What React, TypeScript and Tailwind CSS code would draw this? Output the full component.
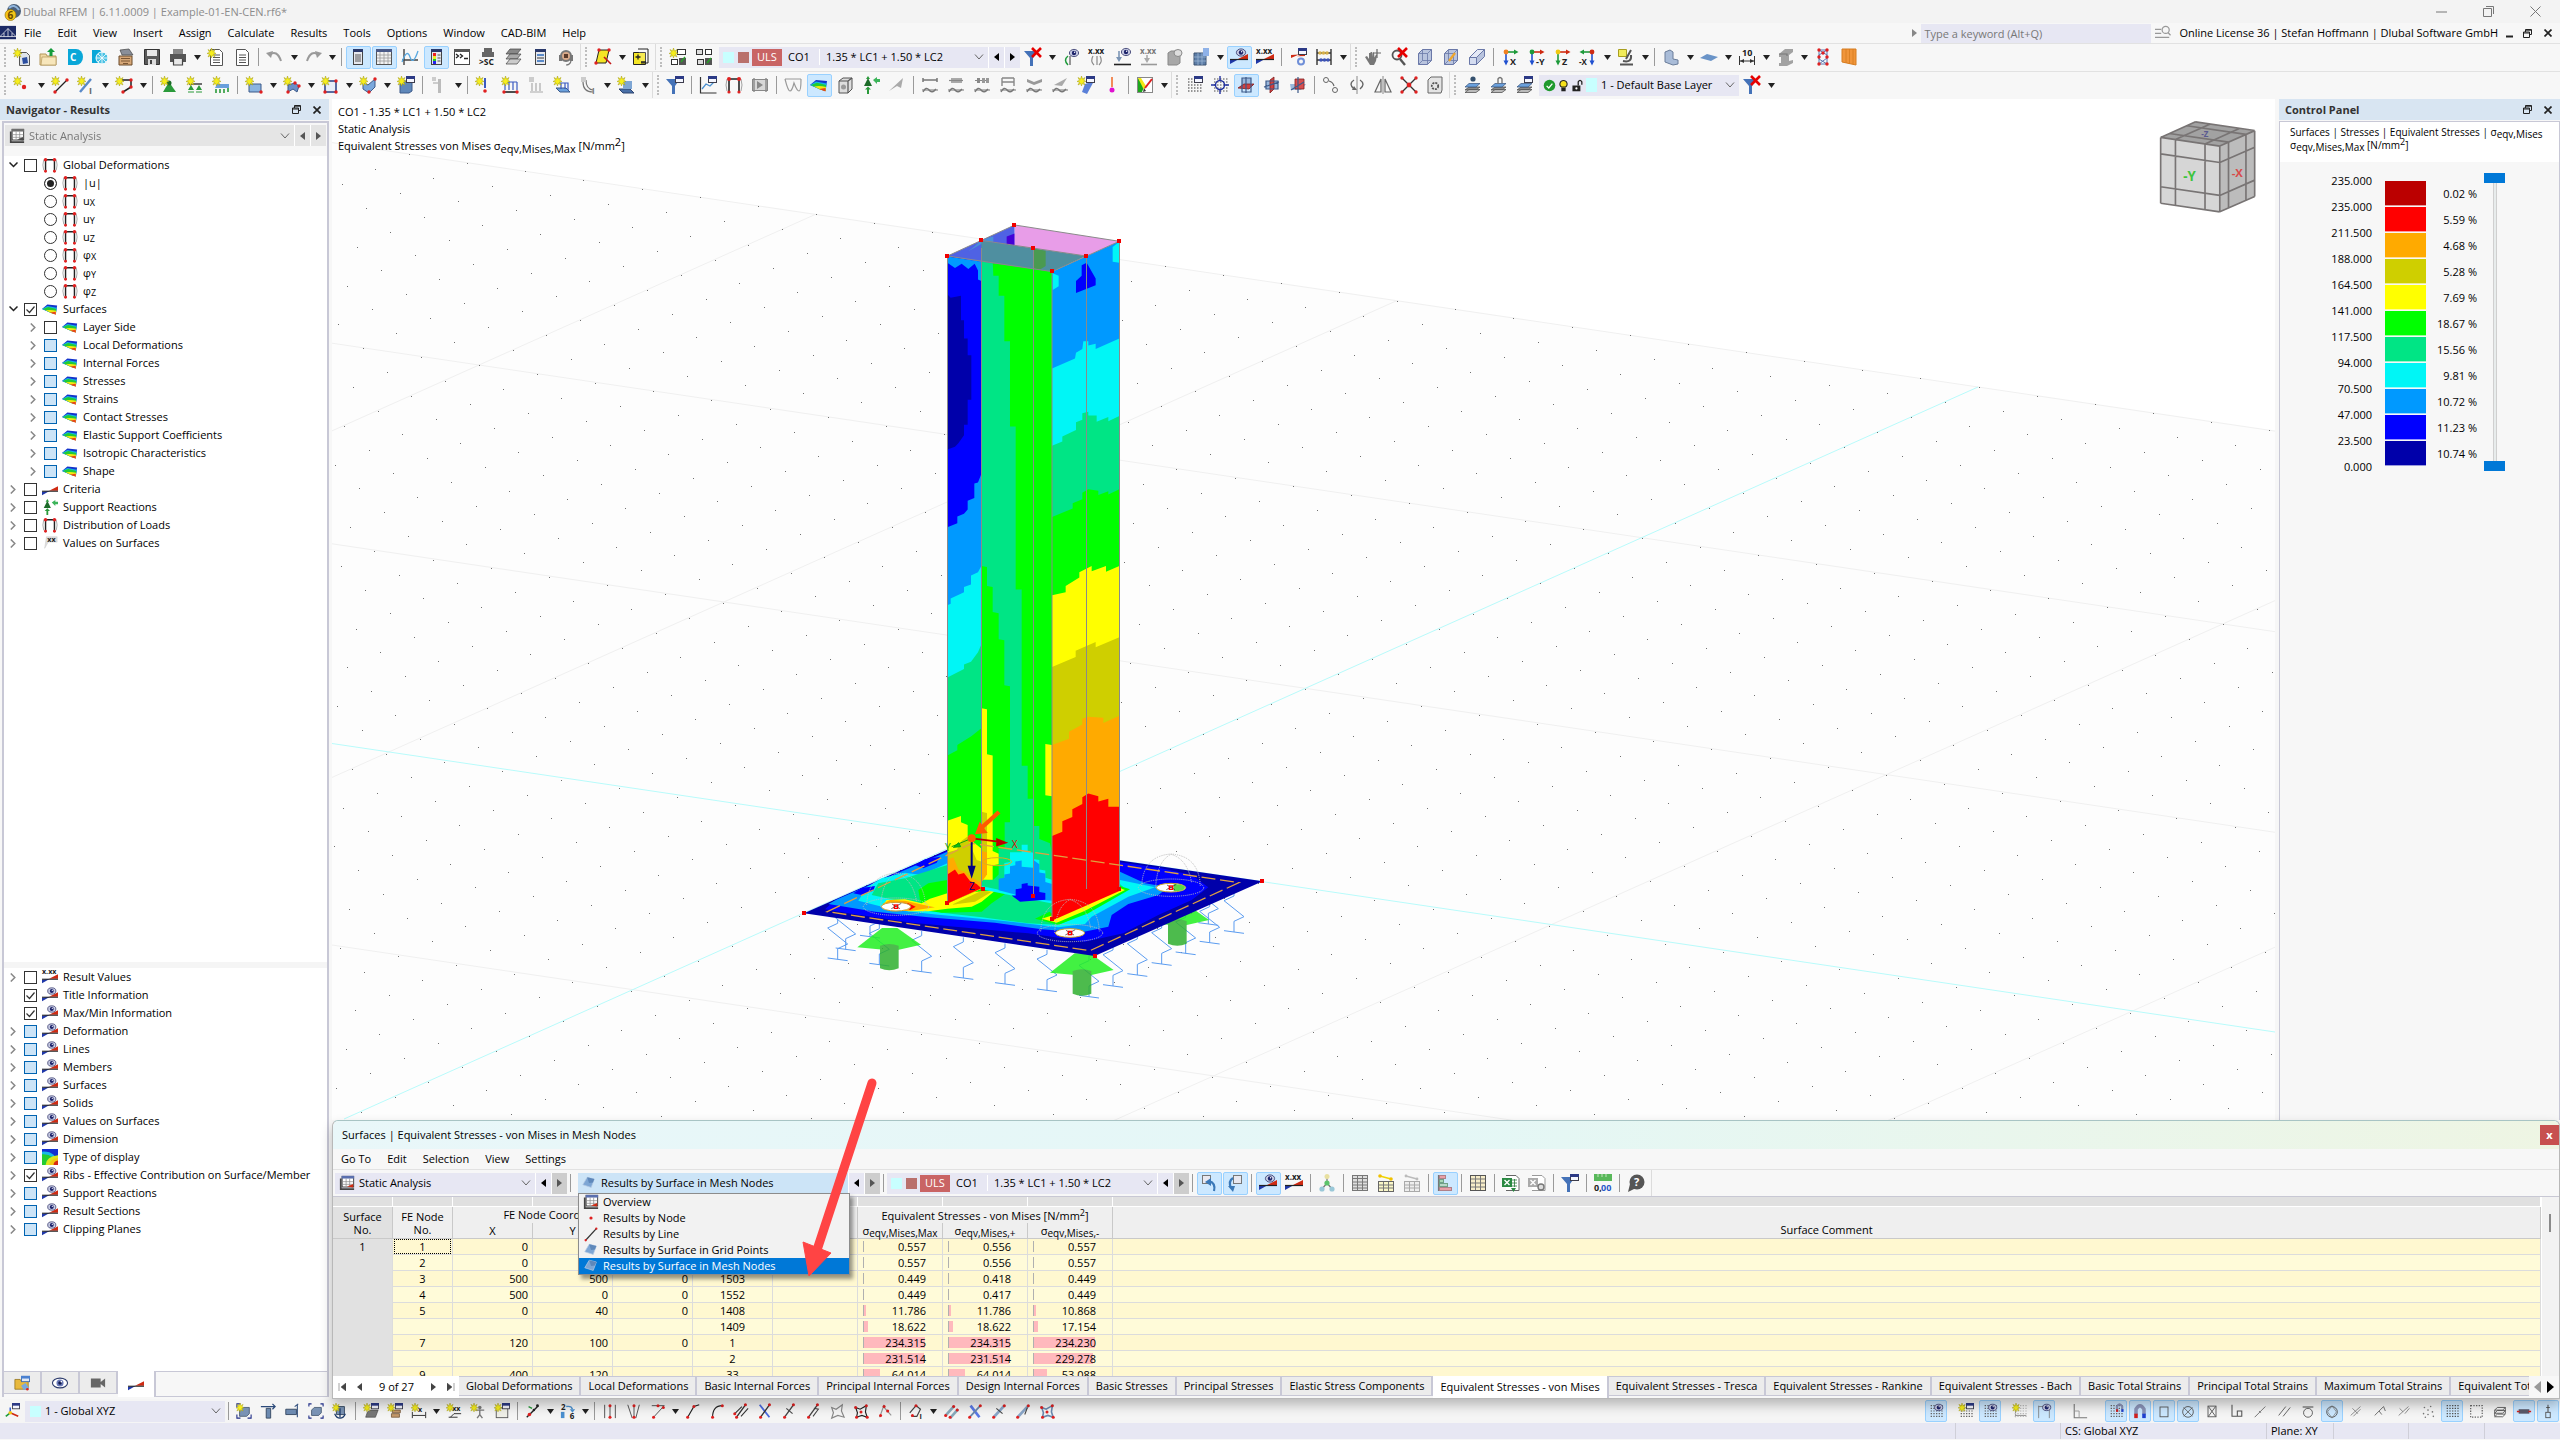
import React, { createElement, Fragment, type ReactNode } from 'react';
import * as Slider from '@radix-ui/react-slider';

/* ---------- drawing helpers for the 18x18 toolbar glyphs ---------- */
const g = (...c: ReactNode[]) => createElement(Fragment, null, ...c);
const f = (d: string, fill: string) => <path d={d} fill={fill} />;
const s = (d: string, stroke: string, w = 1.2) => <path d={d} fill="none" stroke={stroke} strokeWidth={w} />;
const fs = (d: string, fill: string, stroke: string, w = 1) => <path d={d} fill={fill} stroke={stroke} strokeWidth={w} />;
const dot = (x: number, y: number, r = 1.7, c = '#e02020') => <circle cx={x} cy={y} r={r} fill={c} />;
const box = (x: number, y: number, w: number, h: number, fill: string, stroke = 'none') => (
  <rect x={x} y={y} width={w} height={h} fill={fill} stroke={stroke} />
);
const word = (t: string, x: number, y: number, size = 8, c = '#222') => (
  <text x={x} y={y} fontSize={size} fontWeight="bold" fill={c}>{t}</text>
);

const star = fs('M4.5 0l1 3L8 1.500l-1.200 2.700L9 5.500 6.500 6 8 9 5.300 7.500 4.500 10 3.600 7.500 1 9 2.500 6 0 5.500 2.500 4.200 1 1.500 3.600 3z', '#f6ee1c', '#a39a10', 0.5);
const win = g(box(9.5, 0.5, 8, 6, '#f4f6ff', '#3c3c4c'), f('M9 0h9v3H9z', '#2c3a86'));
const eye = (x: number, y: number) => g(
  <ellipse cx={x} cy={y} rx={4.6} ry={3.6} fill="#c9cde4" stroke="#2b2f66" strokeWidth={0.8} />,
  dot(x, y, 2.2, '#1d236b'), dot(x + 0.6, y - 0.8, 0.7, '#fff'));
const wedge = g(f('M0 16v-4l9-1z', '#2038a8'), f('M18 6v5H8z', '#cf2a12'), s('M0 11.500h18', '#222', 1.2));
const redX = s('M8 0l9 9M17 0L8 9', '#e60000', 2.6);
const funnel = f('M0 3h14L9 10v8H6v-8z', '#4472b8');
const doc = (c: string) => g(fs('M3.500 1.500h9l3 3v13h-12z', '#fff', c), s('M6 7h7M6 9.500h7M6 12h7M6 14.500h7', c, 1));
const beam = (c: string) => s('M2 4h14M2 2v4M16 2v4', c, 1.5);
const wave = (c: string) => g(s('M1 14h16', c, 1), s('M2 16q3-6 6-2t7-1', c, 1.4));
const layers = g(fs('M2 14l4-3h11l-4 3z', '#8a8a8a', '#444', 0.7), fs('M2 16.500l4-3h11l-4 3z', '#bbb', '#444', 0.7), fs('M2 11l4-3.500h11L13 11z', '#6aa0dc', '#35507a', 0.7));
const cube = (c: string, st: string) => g(fs('M2.500 5.500l4-4h9v11l-4 4h-9z', c, st), s('M2.500 5.500h9v11M11.500 5.500l4-4M6.500 1.500v11l-4 4M6.500 12.500h9', st, 0.8));
const axis = (a: string, b: string, n: string, t: string) => g(
  s('M5 4h9', a, 1.6), f('M13 1.500l4.500 2.500L13 6.500z', a), s('M5 4v10', b, 1.6), f('M2.500 12.500h5L5 17.500z', b), dot(5, 4, 2.4, n), word(t, 9, 17, 9));
const mesh = (c: string) => {
  const r: ReactNode[] = [];
  for (let y = 3; y < 18; y += 3) r.push(s(`M3 ${y}h14`, c, 1.3));
  return <g strokeDasharray="1.500 1.500">{createElement(Fragment, null, ...r)}</g>;
};
const frame = g(s('M4 16V3h10v13', '#222', 1.6), s('M2 3Q0 9 2 15M16 3q2 6 0 12', '#999', 0.9), dot(4, 3, 2), dot(14, 3, 2), dot(4, 16, 1.6), dot(14, 16, 1.6));
const rainbow = g(
  f('M0 9L6 4l11 1-1.500 10-5-1.500z', '#1433cc'), f('M0 9l6-3.500 10.700 2L15.500 15l-5-1.500z', '#14b4e6'),
  f('M1 9l6-2.300 9 2.300-.5 6-5-1.500z', '#22cc33'), f('M4 10.500q6-1 12 .5l-.5 4-5-1.500z', '#f2e812'), f('M9 13l6.500-1v3.500z', '#e8411c'));
const tri = (c: string) => f('M0 0h1v1z', c);
const analysis = g(box(3.5, 1.5, 13, 12, '#fff', '#333'), f('M3 1h14v3H3z', '#5a6fae'), s('M4 7.500h12M4 10.500h12M8 4v9M12 4v9', '#888', 0.8), f('M1 4h2v13H1zM3 15h14v2H3z', '#444'), f('M9 13l7-3v4z', '#cf2a12'));
const surf = g(fs('M2 11L7 2.500l8 2L11.500 14z', '#7ea6d4', '#b6cbe4', 0.8), f('M7 2.500l8 2-1.600 4L9 9z', '#5f88ba'));
const node3 = (a: string, st: string) => g(s('M4 16L14 2', st, 1.5), s(a, st, 1.2), dot(4, 16), dot(14, 2));

const ICONS: Record<string, ReactNode> = {
  app: g(<circle cx="11" cy="8" r="7" fill="#4a5f7a" />, s('M6 5q5-5 10 2', '#8fb4dc', 2), <circle cx="7.5" cy="12" r="5.5" fill="#f5c518" stroke="#8a6a00" strokeWidth="0.6" />, word('6', 4.5, 15.5, 10, '#6a4b00')),
  rfem: g(box(0, 1, 18, 15, '#1c2a66'), s('M0 13h18M0 13L9 4l9 9M9 4v9M4.500 9v4M13.500 9v4', '#fff', 0.8)),
  newdoc: g(fs('M6.500 4.500h7l3 3v10h-10z', '#dfe4ea', '#555'), f('M9 10l5-1 1 6-5 1z', '#2b4ea0'), star),
  open: g(fs('M1 6h6l1 2h9v9H1z', '#f0d9a4', '#b3975a'), fs('M3 9h14v8H2z', '#f7e6bb', '#b3975a', 0.7), f('M12 0l4 4h-2.500v4h-3V4H8z', '#159c3c')),
  cblue: g(f('M3 1h8a7 8 0 010 16H3z', '#0aa7d8'), word('C', 5, 12.5, 10, '#fff')),
  cloud: g(f('M1 2h8l3 4v9H1z', '#0aa7d8'), <circle cx="11" cy="10" r="6" fill="#4cc2e4" stroke="#fff" />, s('M11 4v12M5 10h12M7 6l8 8M15 6l-8 8', '#fff', 0.8)),
  archive: g(fs('M2 8h13v9H2z', '#d6a777', '#6b4a2b'), fs('M3 2l9-1 4 6H5z', '#8a8f99', '#444', 0.7), s('M4 10.500h9M4 13h9M6 15.500h5', '#7a5634', 1)),
  save: g(fs('M1.500 1.500h15v15h-15z', '#5a5a5a', '#333'), f('M4 2h10v6H4z', '#e8e8e8'), f('M5 11h8v6H5z', '#ddd'), f('M7 12h2v4H7z', '#444')),
  print: g(f('M4 1h10v5H4z', '#888'), f('M1 6h16v8H1z', '#555'), f('M4 11h10v6H4z', '#e8e8e8'), s('M4.500 11v6h9v-6', '#444')),
  reportnew: g(doc('#555'), star),
  report: doc('#555'),
  undo: g(s('M3 7q8-6 12 6', '#9a9a9a', 2), f('M0 5l7-2-2 7z', '#9a9a9a')),
  redo: g(s('M15 7Q7 1 3 13', '#9a9a9a', 2), f('M18 5l-7-2 2 7z', '#9a9a9a')),
  panelL: g(box(4.5, 1.5, 9, 15, '#e6e8ee', '#444'), f('M4 1h10v3H4z', '#2b3a6b'), s('M6 7h6M6 9h6M6 11h6M6 13h6', '#555')),
  tableP: g(box(1.5, 1.5, 15, 15, '#f2f2f2', '#555'), f('M1 1h16v3H1z', '#4a5a88'), s('M2 7h14M2 10h14M2 13h14M5 4v12M9 4v12M13 4v12', '#999', 0.8)),
  graph: g(s('M3 1v16M1 12h16', '#444', 1.4), s('M1 14Q6 0 9 9t8-6', '#58a8e0', 1.3)),
  ctrlP: g(box(4.5, 1.5, 10, 15, '#e6e8ee', '#444'), f('M4 1h11v3H4z', '#2b3a6b'), f('M6 5h3v3H6z', '#e22'), f('M6 8h3v3H6z', '#ee2'), f('M6 11h3v2H6z', '#2c2'), f('M6 13h3v3H6z', '#22e'), s('M10.500 7h3M10.500 10h3M10.500 13h3', '#555')),
  console: g(box(1.5, 1.5, 15, 15, '#fff', '#444'), f('M1 1h16v3H1z', '#555'), s('M3 6l2.500 2L3 10M7 6l2.500 2L7 10M11 10.500h4', '#222', 1.3)),
  sc: g(f('M5 0h8v4H5zM3 4h12v5H3z', '#666'), word('>SC', 0, 17, 8.5)),
  layerst: g(fs('M5 1h11l-4 5H1z', '#888', '#444', 0.7), fs('M5 6h11l-4 5H1z', '#aaa', '#444', 0.7), fs('M5 11h11l-4 5H1z', '#ccc', '#444', 0.7)),
  listwin: g(box(4.5, 1.5, 10, 15, '#e6e8ee', '#444'), f('M4 1h11v3H4z', '#2b3a6b'), f('M6 6h7v2H6zM6 12h7v2H6z', '#5a8ac8'), s('M6 10h7', '#555')),
  headset: g(<circle cx="9" cy="8" r="5" fill="#d9a989" stroke="#777" strokeWidth="2" />, f('M2 7h3v6H2zM13 7h3v6h-3z', '#777'), f('M7 6h4v4H7z', '#5a3a2a'), s('M14 13q-1 4-5 4', '#777')),
  script: g(fs('M5 2h10l-3 13H2z', '#f4e526', '#222'), s('M10 9l7 7', '#c31818', 1.6), dot(5, 2), dot(2, 15), dot(15, 2)),
  addpage: g(fs('M1.500 4.500h12v12h-12z', '#f4e526', '#222'), fs('M6 1h10v14H9', '#fff3', '#222'), s('M3.500 9h5M6 6.500v5M9 14h5', '#222', 1.3)),
  conv1: g(box(8.5, 1.5, 8, 5, '#fff', '#333'), box(2.5, 11.5, 6, 5, '#fff', '#333'), f('M10 10h7v7h-7z', '#555'), s('M12 14l4-5', '#2aa02a', 1.5), star),
  conv2: g(box(1.5, 1.5, 6, 5, '#ddd', '#333'), box(10.5, 1.5, 6, 5, '#fff', '#333'), box(2.5, 11.5, 6, 5, '#ddd', '#333'), f('M10 10h7v7h-7z', '#555'), s('M12 15l4-5', '#2aa02a', 1.5)),
  filterx: g(funnel, redX),
  eyediag: g(s('M6 8q-5 4 0 9', '#1d9a3a', 1.5), s('M8 8v9', '#555'), eye(12, 5)),
  xxxdiag: g(word('x.xx', 0, 6, 8), s('M5 8q-3 5 1 9M12 8q3 5-1 9M9 8v9', '#8a8a8a')),
  eyeload: g(s('M5 3v9', '#7b95b5', 1.6), f('M2 9h6l-3 5z', '#7b95b5'), s('M0 16.500h17', '#222', 1.6), eye(12, 4)),
  xxxload: g(word('x.xx', 0, 6, 8, '#777'), s('M7 7v5', '#aaa', 1.6), f('M4 10h6l-3 5z', '#aaa'), s('M1 16.500h16', '#999', 1.6)),
  eyesolid: g(fs('M2 5l3-2h9v12l-3 2H2z', '#a8a8a8', '#888'), <ellipse cx="12" cy="5" rx="4" ry="3.5" fill="#ddd" stroke="#888" />),
  gridcube: g(fs('M2 5h12v12H2z', '#5d7ea8', '#3c5270'), s('M6 5v12M10 5v12M2 9h12M2 13h12', '#9db6d4', 0.8), f('M11 0h6v8h-6z', '#8fb2e8')),
  eyeres: g(wedge, eye(11, 4.5)),
  xxxres: g(wedge, word('x.xx', 0, 6, 8)),
  resgear: g(f('M2 10V7l8-.500zM16 5v3l-8 .2z', '#cf2a12'), win, <circle cx="12" cy="13.5" r="3" fill="none" stroke="#6f8fd8" strokeWidth="2" />),
  abacus: g(s('M2 1v16M16 1v16M2 5h14M2 12h14', '#333', 1.4), dot(5, 5, 1.8, '#d6b04a'), dot(8.5, 5, 1.8, '#d6b04a'), dot(12, 5, 1.8, '#d6b04a'), dot(6, 12, 1.8, '#3c53b8'), dot(9.5, 12, 1.8, '#3c53b8'), dot(13, 12, 1.8, '#3c53b8')),
  hand: g(f('M1 9l2-1 2 3V5h1.500v4V4H8v5l.5-4.500H10l.5 5 1.500-3 1 .5-1 6-2 4H6z', '#777'), s('M13 1v9M9 5h8', '#666', 1.2)),
  zoomx: g(<circle cx="7" cy="7" r="4.5" fill="none" stroke="#555" strokeWidth="1.8" />, s('M10 11l5 6', '#555', 2.4), redX),
  cube: cube('#b9c4de', '#6a78a8'),
  cubepen: g(cube('#b9c4de', '#6a78a8'), s('M7 13l6-8', '#f0a52a', 2.2)),
  box3d: g(fs('M1.500 9.500h7v7h-7z', '#d4dcf0', '#6a78a8'), fs('M8.500 9.500l8-8v7l-8 8z', '#b9c4de', '#6a78a8'), fs('M1.500 9.500l8-8h7l-8 8z', '#e4e9f6', '#6a78a8')),
  axx: axis('#1d9a3a', '#2050d0', '#f08020', 'X'),
  axy: axis('#cf2a12', '#2050d0', '#1d9a3a', '-Y'),
  axz: axis('#cf2a12', '#1d9a3a', '#f2c812', 'Z'),
  axnx: g(s('M4 4h9', '#1d9a3a', 1.6), f('M5 1.500L.5 4 5 6.500z', '#1d9a3a'), s('M13 4v10', '#2050d0', 1.6), f('M10.500 12.500h5l-2.500 5z', '#2050d0'), dot(13, 4, 2.4, '#cf2a12'), word('-X', 0, 17, 8)),
  microscope: g(fs('M1.500 1.500h8v7h-8z', '#f2ec5a', '#a89e20'), s('M14 2l-5 9M6 13q9 2 8-6M3 16.500h13', '#555', 2)),
  chairs: g(fs('M3 4l5-2 3 2v7l5 1v4l-5 1-8-3z', '#a9bcd8', '#6a7d9a')),
  plane: f('M0 10l7-4 11 3-7 4z', '#6a94c8'),
  dim10: g(word('10', 4, 8, 9), s('M1.500 8v9M16.500 8v9M2 13h14', '#333', 1), f('M2 13l4-2v4zM16 13l-4-2v4z', '#333')),
  ibeam: g(f('M3 6l6-5h8v3l-4 3v6l4-1v3l-6 3H3v-3h2V9H3z', '#a2a2a2'), s('M3 6h8v2', '#777')),
  meshc: g(s('M5 2h8v14H5zM5 2l8 5M13 2L5 7v4l8 5M5 16l8-6', '#5a77b0', 1), dot(5, 2), dot(13, 2), dot(5, 9), dot(13, 9), dot(5, 16), dot(13, 16), dot(9, 5)),
  orange: g(fs('M2 1h14v16l-14-3z', '#f0953a', '#d67c20'), s('M6 1v14M9.500 1v15M13 1v15', '#d67c20', 0.8)),

  node: g(star, dot(11, 11, 2.2)),
  line: g(s('M4 16L16 4', '#222', 1.3), dot(4, 16), dot(16, 4), star),
  member: g(s('M3 16L14 3', '#5a8ac8', 2.4), word('I', 12, 18, 9, '#666'), star),
  polyl: g(s('M7 4h9v7l-8 5', '#222', 1.5), dot(16, 4), dot(8, 16), dot(16, 11), star),
  supn: g(f('M9 6l7 10H3z', '#2a9a3a'), dot(9, 7, 2.5, '#1c6b28'), star),
  supl: g(s('M3 8h13', '#333', 1.4), f('M5 9l3 5H2zM13 9l3 5h-6z', '#2a9a3a'), s('M2 16h6M10 16h6', '#2a9a3a'), star),
  sups: g(f('M5 8h12v4H3z', '#6aa0dc'), s('M4 13v4M8 13v4M12 13v4M16 12v4', '#2a9a3a', 1.6), star),
  sfa: g(fs('M4 8h12v8H4z', '#8ab4e0', '#3c5a8a'), dot(16, 16), star),
  sfb: g(fs('M5 9l7-2 4 3-2 6-4-3-5 3z', '#6a8fc8', '#3c5a8a'), dot(12, 7), dot(16, 10), dot(5, 16), star),
  sfc: g(fs('M4 5h11v11H4z', '#e8eef8', '#5a6aa0', 2), dot(15, 5), dot(15, 16), dot(4, 16), star),
  sfd: g(fs('M4 6l5 3 7-6v8l-6 6-6-4z', '#7aa8dc', '#3c5a8a'), dot(16, 3), dot(10, 16), star),
  solid: g(fs('M3 7l4-2h8v10l-3 2H3z', '#5f88ba', '#3c5a8a'), win, star),
  grayn: g(f('M8 3h3v14H8z', '#bbb'), f('M3 6h5v2H3z', '#ccc'), f('M2 1h4v4H2z', '#ccc')),
  ldn: g(s('M10 2v10', '#3a5ac0', 2), dot(10, 15, 1.8), star),
  ldl: g(s('M3 16h14', '#222', 1.6), s('M4 6h12M4 6v8M8 6v8M12 6v8M16 6v8', '#3a5ac0'), dot(3, 16), dot(16, 16), star),
  ldg: g(s('M3 16h13M5 7v8M9 7v8M13 7v8', '#aaa', 1.2), f('M2 1h5v5H2z', '#ccc')),
  lds: g(fs('M3 12h10l4 4H7z', '#6aa0dc', '#3c5a8a'), s('M4 7h11v7M8 7v6M12 7v6', '#3a5ac0'), star),
  ldc: g(s('M4 6q0 10 10 10M7 4q0 9 7 10', '#777'), f('M2 1h5v5H2z', '#ccc'), word('I', 13, 18, 8, '#777')),
  ldp: g(fs('M2 13h11l4 4H6z', '#4a70a8', '#2c4470'), f('M6 5h9v8H6z', '#7ea6d4'), star),
  filterw: g(funnel, win),
  diagw: g(s('M1.500 1v16h16', '#333', 1.2), s('M3 13l4-5 4 2 6-6', '#4a90d0', 1.3), win),
  deform: frame,
  film: g(box(1.5, 3.5, 15, 11, '#d8d8d8', '#888'), f('M6 5l6 4-6 4z', '#888'), s('M3 2v14M15 2v14', '#888', 1.4)),
  memres: s('M1 3h16M1 3q3 12 5 12t4-8q3 8 5 8t2-12', '#999', 1.2),
  rainbow,
  dice: g(fs('M3 5l4-3h9v11l-4 4H3z', '#ddd', '#555'), s('M3 5h9v12M12 5l4-3', '#555'), <circle cx="7.5" cy="11" r="2.5" fill="#999" />),
  reaction: g(f('M6 2l4 8H2z', '#1c6b28'), f('M6 0l2 3H4z', '#2a9a3a'), f('M5 12h2v6H5zM3 13.500L6 10.500l3 3z', '#2a9a3a'), f('M11 4l4-3v2h3v3h-3v2z', '#3cb45a')),
  leaf: f('M1 15L15 2l-2 10-4-2z', '#aaa'),
  r1: g(beam('#777'), wave('#777')),
  r2: g(box(4, 2, 11, 5, '#aaa'), s('M2 4.500h14', '#888'), wave('#777')),
  r3: g(s('M2 4.500h14', '#888', 1), box(4, 2, 3, 5, '#888'), box(9, 2, 3, 5, '#999'), box(13, 2, 3, 5, '#999'), wave('#777')),
  r4: g(s('M3 2v8M15 2v8M3 6h12M3 2h12', '#888', 1.4), wave('#777')),
  r5: g(f('M2 3l7 3 8-3v3l-8 3-7-3z', '#999'), wave('#777')),
  r6: g(f('M3 9L16 2l-5 8z', '#aaa'), wave('#777')),
  sfres: g(f('M5 16l3-8 9-3-7 13z', '#5a80d8'), win, star),
  thermo: g(s('M9 1v10', '#f07030', 1.6), dot(9, 14, 2.5, '#e010d0')),
  rgb: g(box(1.5, 1.5, 15, 15, '#fff', '#888'), f('M2 2l6 9-2 5H2z', '#1ca81c'), f('M2 2h3l5 8-2 4z', '#f2e812'), s('M9 12l7-9', '#e02020', 2), f('M8 12l2 3-3 1z', '#333')),
  gridwin: g(mesh('#777'), win),
  target: g(mesh('#888'), <circle cx="9" cy="9" r="4.5" fill="none" stroke="#2030a0" strokeWidth="1.4" />, s('M9 0v5M9 13v5M0 9h5M13 9h5', '#2030a0', 1.4)),
  plxy: g(f('M5 2h9v8H5z', '#9ab8dc'), fs('M1 12l6-4h10l-5 5z', '#d04040', '#802020', 0.8), s('M9 1v16M5 2h9v14H5z', '#3c5a8a')),
  plyz: g(f('M3 5h12v8H3z', '#9ab8dc'), fs('M7 4l4-3v12l-4 4z', '#d04040', '#802020', 0.8), s('M1 11l15-5M3 5h12v8H3z', '#3c5a8a')),
  plxz: g(f('M1 8h16l-5 6H2z', '#9ab8dc'), fs('M6 3h9v10H6z', '#d85050', '#802020', 0.8), s('M9 1v16M2 14l13-8', '#3c5a8a')),
  snap1: g(<circle cx="4" cy="4" r="2.5" fill="none" stroke="#666" />, <circle cx="13" cy="14" r="2.5" fill="none" stroke="#666" />, s('M7 5q4 1 5 5', '#666')),
  rotate: g(s('M9 0v18', '#888', 1), s('M6 4Q0 8 6 13M12 4q6 4 0 9', '#666', 1.4), f('M4 14l5 0-3-4z', '#666')),
  mirror: g(s('M9 0v18', '#888', 1), s('M7 3v13H1zM11 3v13h6z', '#666')),
  scalex: g(s('M2 2l14 14M16 2L2 16', '#333', 1.4), dot(9, 9, 2.4), dot(2, 2), dot(16, 2), dot(2, 16), dot(16, 16)),
  boxgear: g(fs('M2 4l3-3h11v13l-1 3H2z', '#e4e4e4', '#666'), <circle cx="9" cy="10" r="3.2" fill="none" stroke="#555" strokeWidth="1.8" strokeDasharray="2 1" />),
  layereye: g(layers, dot(10, 3, 2.6, '#34506e')),
  layerlock: g(layers, s('M9 8V3q2-3 4 0v4', '#777', 1.4)),
  layerwin: g(layers, win),

  xyzwin: g(s('M7 11v-6', '#2050d0', 1.5), s('M7 11l-5 4', '#1d9a3a', 1.8), s('M7 11l9 4', '#cf2a12', 1.8), dot(7, 11, 2, '#f2c812'), win),
  bcube: g(s('M1 5V1h4M13 17h4v-4M1 13v4h4', '#1c2a86', 1.2), fs('M4 8l3-3h8v7l-3 3H4z', '#7a93b4', '#33465f', 0.8), star),
  bcol: g(fs('M7 6h5v11H7z', '#6c8ab0', '#33465f'), s('M1 4h16M14 1l3 3-3 3', '#2c4a7a', 1.4)),
  bbeam: g(fs('M2 7h12v6H2z', '#6c8ab0', '#33465f'), s('M15 2v14M12 4l4-3', '#2c4a7a', 1.2)),
  bbox: g(s('M1 4V1h3M14 1h3v3M1 14v3h3M17 14v3h-3', '#1c2a86', 1.2), fs('M4 8l3-3h8v6l-3 3H4z', '#7a93b4', '#33465f', 0.8)),
  banchor: g(fs('M5 4h9v9H5z', '#7a93b4', '#33465f'), s('M9 6v10M3 12q2 5 6 5t6-5', '#1c3a6a', 1.4), star),
  bsheet: g(fs('M5 10l3-2h9l-3 8H3z', '#777', '#444', 0.7), win, star),
  bbrick: g(fs('M6 8h9v3H6zM5 12h9v4H5z', '#c49a6c', '#6a4b2a', 0.8), win, star),
  bdimx: g(word('x', 8, 10, 8), s('M1.500 10v7M16.500 10v7M2 14h14', '#222', 1), star),
  bdimxx: g(word('xx', 7, 9, 8), s('M5 16l4-4h8M3 16h10', '#222', 1), star),
  bman: g(dot(11, 5, 2, '#7a7a7a'), s('M11 7v6M6 8h10M11 13l-3 4M11 13l3 4', '#7a7a7a', 1.6), star),
  bwin: g(box(2.5, 5.5, 13, 11, '#f0f0e8', '#555'), win, star),
  blink: g(s('M2 16L15 3', '#222', 1.6), dot(5, 13, 2), dot(10, 8, 1.4, '#222'), dot(14, 3, 1.6, '#222'), s('M4 4l4 2', '#2a9a3a', 1.6)),
  bnum: g(word('2', 1, 8, 9), word('6', 11, 18, 9), s('M7 4q6-1 7 3', '#4a90d0', 1.6), f('M11 7h6l-3 4z', '#4a90d0'), f('M1 10h4v7H1z', '#4a90d0')),
  l1: g(s('M3 2v15M9 2v15M15 2v15', '#555', 1.1), dot(9, 3), dot(9, 16)),
  l2: g(s('M2 2l5 15M9 2v15M15 2l-4 15', '#555', 1.1), dot(9, 3), dot(9, 16)),
  l3: g(s('M2 3h14L4 16', '#555', 1.1), dot(15, 5), dot(4, 16), dot(9, 3)),
  l4: g(s('M16 2l-6 2-7 12', '#222', 1.3), dot(10, 4), dot(3, 16)),
  l5: g(s('M4 16Q4 3 15 3', '#222', 1.3), dot(15, 3), dot(4, 16)),
  l6: g(node3('M2 12L10 4M9 15l8-9', '#333'), dot(2, 12)),
  l7: g(s('M3 2l11 14', '#4a6ae0', 2), node3('M3 15h0', '#333')),
  l8: node3('M6 6l7 6', '#444'),
  l9: node3('M10 6l5 1-6 8', '#444'),
  l10: s('M3 5l5 2 7-5-1 7 3 7-7-2-7 3 2-6z', '#888', 1.3),
  l11: g(s('M3 5l5 2 7-4-1 7 2 6-6-2-6 2 1-5z', '#222', 1.3), dot(3, 5), dot(15, 3), dot(9, 10), dot(16, 16), dot(4, 16)),
  l12: g(s('M8 2l-5 14M8 5l8 9', '#999', 1.3), dot(8, 4), dot(12, 9), dot(4, 14)),
  m1: g(s('M2 11L9 3l5 4-4 8H4', '#444', 1.3), dot(9, 3), dot(5, 14), word('I', 13, 18, 8)),
  m2: g(s('M3 14L12 4M8 17l9-10', '#8ab', 3), dot(3, 14), dot(12, 4), dot(16, 8), dot(8, 16)),
  m3: g(s('M4 3l10 13', '#5a7ae8', 3), s('M3 16L15 3', '#6a8ab0', 2), dot(3, 16), dot(15, 3)),
  m4: g(s('M3 16L15 3', '#8aa6c8', 3), s('M6 6l7 6', '#444'), dot(3, 16), dot(15, 3)),
  m5: g(s('M3 16L15 3', '#8aa6c8', 3), s('M14 5l-3 8', '#444'), dot(3, 16), dot(15, 3)),
  m6: g(s('M3 5l5 2 7-4-1 7 2 6-6-2-6 2 1-5z', '#6a8ab0', 1.8), dot(3, 5), dot(15, 3), dot(9, 10), dot(16, 16), dot(4, 16)),

  geye: g(mesh('#666'), eye(12, 5)),
  gnew: g(mesh('#666'), win, star),
  gstar: g(s('M4 16V4M4 14h12', '#777', 0.9), mesh('#bbb'), star),
  leye: g(s('M3 3v14M3 4h13M15 6v11', '#777', 0.9), eye(12, 5)),
  corner: g(s('M2.500 1v15.500H17', '#777', 1.2), s('M3 9h5v7', '#999', 1)),
  gmag: g(mesh('#666'), s('M10 8V4q3-5 6 0v4', '#8a93b8', 2.4), f('M9 7h2.500v3H9z', '#d02020'), f('M15 7h2.500v3H15z', '#2040d0')),
  magnet: g(s('M4.500 13V7q4.500-8 9 0v6', '#8a93b8', 4), f('M2.500 12h4v5h-4z', '#d02020'), f('M11.500 12h4v5h-4z', '#2040d0')),
  sq: box(4.5, 4.5, 9, 11, 'none', '#555'),
  circx: g(<circle cx="9" cy="10" r="6" fill="none" stroke="#555" />, s('M4 5l10 10M14 5L4 15', '#555', 0.9)),
  sqx: g(box(4.5, 3.5, 9, 12, 'none', '#555'), s('M5 4l8 11M13 4L5 15', '#555', 1)),
  perp: g(s('M4.500 2v13h11V9h-5v6', '#555', 1.2)),
  slash: s('M3 16L15 4M8 9l2 2', '#777', 1.1),
  par: s('M3 14L11 4M8 15l8-10', '#666', 1.1),
  tang: g(<circle cx="9" cy="11" r="5" fill="none" stroke="#555" />, s('M3 4.500h12', '#555', 1.2)),
  circ: g(<circle cx="9" cy="10" r="6" fill="none" stroke="#555" />, s('M9 3l5 7-5 7-5-7z', '#777', 0.8)),
  xs1: s('M3 14L14 4M6 15l8-8M5 6l6 6', '#777', 0.9),
  xs2: s('M3 14l5-5 3 4M8 9l5-5 2 5', '#666', 1),
  xs3: s('M3 14L14 4M4 6l4 4M10 12l5-6', '#777', 0.9),
  dots: g(dot(5, 5, 0.9, '#777'), dot(12, 4, 0.9, '#777'), dot(9, 8, 0.9, '#777'), dot(14, 10, 0.9, '#777'), dot(4, 12, 0.9, '#777'), dot(9, 13, 0.9, '#777'), dot(15, 15, 0.9, '#777'), dot(6, 16, 0.9, '#777')),
  griddots: mesh('#555'),
  bdots: <g strokeDasharray="1.500 1.500">{s('M3 3h13v13H3z', '#666', 1.4)}</g>,
  stack: s('M3 15.500l3-3h9l-3 3zM3 11.500l3-3h9l-3 3zM6 5h9l-3 3H3zM15 5v7M3 8v7', '#555', 1),
  redb: g(f('M3 7h12v5H3z', '#5a5a6a'), s('M1 9.500h3M14 9.500h3', '#d02020', 1.6)),
  plumb: g(s('M9 2v8M7 5h4', '#555'), box(6.5, 10.5, 5, 6, 'none', '#555')),

  gotoL: g(box(2.5, 1.5, 8, 8, '#e8e8f0', '#777'), s('M9 7q7 2 5 10', '#3a78b8', 2.2), f('M5 8l6-4v8z', '#3a78b8')),
  gotoR: g(box(7.5, 1.5, 8, 8, '#e8e8f0', '#777'), s('M7 4Q2 7 5 14', '#3a78b8', 2.2), f('M2 12h7l-2 6z', '#3a78b8')),
  tree: g(s('M9 4v5M9 9l-5 6M9 9l5 6', '#777'), dot(9, 2.5, 2.5, '#e8e0a0'), dot(9, 9, 2.6, '#5cc46a'), dot(4, 15, 2.6, '#9ac8d8'), dot(14, 15, 2.6, '#9ac8d8')),
  tgray: g(box(1.5, 1.5, 15, 15, '#ddd', '#777'), s('M2 4.500h14M2 8h14M2 11h14M2 14h14M6.500 2v14M11.500 2v14', '#777', 1)),
  tyel: g(box(1.5, 7.5, 15, 10, '#faf7c8', '#666'), s('M2 11h14M2 14h14M6.500 8v9M11.500 8v9', '#777', 1), s('M3 2l11 3', '#f0d400', 1.6), dot(3, 2, 1.8, '#f0c000'), dot(14, 5, 1.8, '#f0c000')),
  tyelg: g(box(1.5, 7.5, 15, 10, '#eee', '#aaa'), s('M2 11h14M2 14h14M6.500 8v9M11.500 8v9', '#aaa', 1), s('M3 2l11 3', '#bbb', 1.4), dot(3, 2, 1.4, '#bbb'), dot(14, 5, 1.4, '#bbb')),
  bars: g(s('M2.500 1v16', '#777', 1.2), box(3.5, 1.5, 6, 3, '#e8a0a8', '#b08088'), box(3.5, 5.5, 4, 3, '#a8d8b8', '#70a088'), box(3.5, 9.5, 8, 3, '#b8d8c8', '#70a088'), box(3.5, 13.5, 12, 3, '#e8a0a8', '#b08088')),
  tlines: g(box(1.5, 1.5, 15, 15, '#f7edc8', '#555'), s('M2 5h14M2 9h14M2 13h14M6.500 2v14M11.500 2v14', '#777', 1)),
  xls: g(fs('M4 1.500h10l3 3v12H4', '#fff', '#666'), f('M0 4h10v9H0z', '#2a8a42'), s('M2.500 6l5 5M7.500 6l-5 5', '#fff', 1.4), s('M10 6h5M10 9h5M10 12h5M12.500 5v8', '#2a7a3a', 0.8), f('M9 14h5l-2.500 4z', '#2a8a42')),
  xlsg: g(fs('M4 1.500h10l3 3v12H4', '#fff', '#999'), f('M0 4h10v9H0z', '#aaa'), s('M2.500 6l5 5M7.500 6l-5 5', '#fff', 1.4), <circle cx="13" cy="13" r="3" fill="#ddd" stroke="#777" strokeWidth="1.4" />),
  dec: g(f('M0 0h18v7H0z', '#58b85a'), s('M4 0v3M8 0v3M12 0v3', '#dff0d8', 0.8), word('0,', 0, 17, 9), word('00', 7, 17, 9, '#2858c8')),
  help: g(<circle cx="10" cy="8" r="7.5" fill="#555" />, f('M3 10l6 4-8 4z', '#555'), word('?', 7, 12, 11, '#fff')),

  analysis, surf, frame, wedge,
  pin: dot(9, 9, 1.8),
  seg: g(s('M3 16L15 3', '#333', 1.4), dot(3, 16, 1.3), dot(15, 3, 1.3)),
  xxflag: g(fs('M5 2h12v6H7l-4 7z', '#ddd', '#ccc', 0.6), word('xx', 6, 8, 8)),
  display: g(box(0, 0, 18, 18, '#1230d0'), f('M0 3Q16 2 18 18H0z', '#18b8e8'), f('M0 6Q14 5 15 18H0z', '#22cc33'), f('M4 18Q5 8 18 7v11z', '#d8e820'), f('M8 18q1-7 10-8v8z', '#f2c812'), f('M13 18q0-4 5-5v5z', '#d82a12')),
  navtab: g(fs('M1 5h6l1 2h8v9H1z', '#e8b93c', '#8a6a10', 0.8), box(8.5, 1.5, 9, 6, '#dfe8f6', '#3a68b0'), f('M8 1h10v3H8z', '#4a80d0'), f('M8 12l5-3 4 6-6 2z', '#7aa8dc'), dot(15, 16, 1.4)),
  eyebig: g(<ellipse cx="9" cy="9" rx="8.5" ry="5.5" fill="#fff" stroke="#2b3a6b" strokeWidth="1.2" />, dot(9, 9, 4, '#6a7ab8'), dot(9, 9, 2, '#111a50'), dot(10.5, 7.5, 0.9, '#fff')),
  camera: f('M1 4h11v10H1zM12 8l5-4v10l-5-4z', '#666'),
  search: g(s('M0 5h7M0 9.500h7M0 14h16', '#999', 1.4), <circle cx="12" cy="5.5" r="4" fill="none" stroke="#999" strokeWidth="1.4" />, s('M14.500 8.500l3 3', '#999', 1.4)),
  ok: g(<circle cx="9" cy="9" r="8" fill="#1f9a2e" />, s('M5 9.500l3 3 5-6', '#fff', 1.8)),
  bulb: g(dot(9, 7, 5, '#f7e21c'), s('M9 2a5 5 0 013 9H6a5 5 0 013-9z', '#222', 1.4), f('M6 12h6v5H6z', '#222')),
  unlock: g(f('M2 9h11v8H2z', '#222'), s('M10 9V4q2.500-4 5 0v4', '#222', 1.8), dot(7.5, 13, 1.5, '#fff')),
  small: tri('#222'),
};

const Icon = ({ n, small }: { n: string; small?: boolean }) => (
  <svg viewBox="0 0 18 18" aria-hidden="true" className={small ? 'size-4 shrink-0 overflow-visible' : 'size-[18px] shrink-0 overflow-visible'}>{ICONS[n]}</svg>
);

/* ---------- small shared controls ---------- */
const Caret = () => <svg viewBox="0 0 7 5" className="h-[5px] w-[7px]"><path d="M0 0h7L3.500 5z" fill="#222" /></svg>;
const Chevron = () => <svg viewBox="0 0 10 6" className="pointer-events-none mr-1 h-1.5 w-2.5 shrink-0"><path d="M1 .5l4 4.500L9 .5" fill="none" stroke="#666" /></svg>;
const Sep = () => <span className="flex w-[7px] shrink-0 justify-center"><i className="h-[18px] w-px bg-[#9a9a9a]" /></span>;
const Grip = () => <span className="flex w-[9px] shrink-0 justify-center"><i className="h-5 border-l-2 border-dotted border-[#bdbdbd]" /></span>;

function Tools({ items, tight }: { items: string; tight?: boolean }) {
  return (
    <>
      {items.split(' ').map((t, i) => {
        if (t === '|') return <Sep key={i} />;
        if (t === '#') return <span key={i} className="ml-px flex h-full shrink-0 items-center border-l border-[#dcdcdc]"><Grip /></span>;
        if (t === '^') return <button key={i} aria-label="More" className={`${tight ? 'w-[11px]' : 'w-3'} flex h-5 shrink-0 items-center justify-center`}><Caret /></button>;
        const on = t[0] === '*';
        const n = on ? t.slice(1) : t;
        return (
          <span key={i} className={`${tight ? 'w-6' : 'w-[26px]'} flex shrink-0 justify-center`}>
            <button aria-label={n} className={`${tight ? 'size-[22px]' : 'h-[23px] w-[25px]'} flex items-center justify-center rounded-xs border ${on ? 'border-[#99d1ff] bg-[#cce8ff]' : 'border-transparent'}`}>
              <Icon n={n} small={tight} />
            </button>
          </span>
        );
      })}
    </>
  );
}

function Arrows({ dark, both }: { dark?: boolean; both?: boolean }) {
  return (
    <>
      <button aria-label="Previous" className={`flex h-[21px] w-4 shrink-0 items-center justify-center border-l border-white ${both ? 'bg-[#e4e4e4]' : 'bg-[#e7e7f3]'}`}>
        <svg viewBox="0 0 5 8" className="h-2 w-[5px]"><path d="M5 0v8L0 4z" fill={both ? '#555' : '#000'} /></svg>
      </button>
      <button aria-label="Next" className={`flex h-[21px] w-4 shrink-0 items-center justify-center border-l border-white ${both ? 'bg-[#e4e4e4]' : dark ? 'bg-[#cdcdcd]' : 'bg-[#e7e7f3]'}`}>
        <svg viewBox="0 0 5 8" className="h-2 w-[5px]"><path d="M0 0v8l5-4z" fill={both || dark ? '#555' : '#000'} /></svg>
      </button>
    </>
  );
}

function Combo({ icon, value, className, label, children }: { icon?: string; value: string; className: string; label: string; children?: ReactNode }) {
  return (
    <span className={`flex h-[21px] shrink-0 items-center pl-1 ${className}`}>
      {icon && <Icon n={icon} small />}
      {children}
      <select aria-label={label} className="h-full min-w-0 flex-1 appearance-none bg-transparent pl-1 outline-none"><option>{value}</option></select>
      <Chevron />
    </span>
  );
}

const LoadCase = ({ className }: { className: string }) => (
  <Combo label="Load combination" value="1.35 * LC1 + 1.50 * LC2" className={`bg-[#e7e7f3] ${className}`}>
    <i className="size-[11px] bg-[#c8ffff]" />
    <i className="ml-1 size-[11px] bg-[#b9706c]" />
    <b className="ml-[3px] flex h-[17px] w-[30px] items-center justify-center bg-[#c96464] font-normal text-white">ULS</b>
    <span className="ml-1.5 w-[30px]">CO1</span>
    <i className="ml-px mr-0.5 h-4 w-px bg-white" />
  </Combo>
);

const RestoreX = () => (
  <span className="ml-auto flex items-center gap-3 pr-2">
    <button aria-label="Float"><svg viewBox="0 0 9 9" className="size-[9px]"><path d="M2.500 3V.5h6v5H6M.5 3h6v5.500h-6zM.5 4h6M2.500 1.200h6" fill="none" stroke="#222" /></svg></button>
    <button aria-label="Close"><svg viewBox="0 0 8 8" className="size-2"><path d="M.5.5l7 7M7.500.5l-7 7" stroke="#222" strokeWidth="1.700" /></svg></button>
  </span>
);

const Sigma = ({ t }: { t: string }) => <>σ<sub className="bottom-0 top-0.5 text-[10px]">{t}</sub></>;
const Sq = () => <sup className="-top-1 text-[9px]">2</sup>;

/* ---------- navigator trees ---------- */
type Row = { t: ReactNode; k: string; ic: string; depth?: number; state?: 'off' | 'on' | 'mix'; ex?: 'open' | 'closed' | null; radio?: 'on' | 'off' };
const def = (k: string, a: string, b: string): Row => ({ k, t: <>{a}{b && <sub className="bottom-0 top-px text-[9px]">{b}</sub>}</>, ic: 'frame', depth: 1, ex: null, radio: 'off' });
const srf = (t: string, state: 'off' | 'mix' = 'mix'): Row => ({ k: 's' + t, t, ic: 'rainbow', depth: 1, ex: 'closed', state });
const TREE1: Row[] = [
  { k: 'gd', t: 'Global Deformations', ic: 'frame', state: 'off', ex: 'open' },
  { ...def('u', '|u|', ''), radio: 'on' }, def('ux', 'u', 'X'), def('uy', 'u', 'Y'), def('uz', 'u', 'Z'),
  def('px', 'φ', 'X'), def('py', 'φ', 'Y'), def('pz', 'φ', 'Z'),
  { k: 'sf', t: 'Surfaces', ic: 'rainbow', state: 'on', ex: 'open' },
  srf('Layer Side', 'off'), srf('Local Deformations'), srf('Internal Forces'), srf('Stresses'), srf('Strains'),
  srf('Contact Stresses'), srf('Elastic Support Coefficients'), srf('Isotropic Characteristics'), srf('Shape'),
  { k: 'cr', t: 'Criteria', ic: 'wedge', state: 'off', ex: 'closed' },
  { k: 'sr', t: 'Support Reactions', ic: 'reaction', state: 'off', ex: 'closed' },
  { k: 'dl', t: 'Distribution of Loads', ic: 'frame', state: 'off', ex: 'closed' },
  { k: 'vs', t: 'Values on Surfaces', ic: 'xxflag', state: 'off', ex: 'closed' },
];
const ev = (t: string, state: 'on' | 'mix' = 'mix', ex: 'closed' | null = 'closed', ic = 'eyeres'): Row => ({ k: t, t, ic, state, ex });
const TREE2: Row[] = [
  { k: 'rv', t: 'Result Values', ic: 'xxxres', state: 'off', ex: 'closed' },
  ev('Title Information', 'on', null), ev('Max/Min Information', 'on', null), ev('Deformation'), ev('Lines'), ev('Members'),
  ev('Surfaces'), ev('Solids'), ev('Values on Surfaces'), ev('Dimension'), ev('Type of display', 'mix', 'closed', 'display'),
  ev('Ribs - Effective Contribution on Surface/Member', 'on'), ev('Support Reactions'), ev('Result Sections'), ev('Clipping Planes'),
];

const Tree = ({ rows }: { rows: Row[] }) => (
  <ul>
    {rows.map((r) => (
      <li key={r.k} className={`flex h-[18px] items-center ${r.depth ? 'pl-[22px]' : 'pl-0.5'}`}>
        <button aria-label="Expand" className="mr-1 flex w-3.5 justify-center">
          {r.ex === 'open' && <svg viewBox="0 0 9 6" className="h-1.5 w-[9px]"><path d="M.5.5l4 4 4-4" fill="none" stroke="#222" strokeWidth="1.500" /></svg>}
          {r.ex === 'closed' && <svg viewBox="0 0 6 9" className="h-[9px] w-1.5"><path d="M.8.5l4 4-4 4" fill="none" stroke="#888" strokeWidth="1.500" /></svg>}
        </button>
        <label className="flex items-center">
          {r.radio ? (
            <input type="radio" name="deformation" defaultChecked={r.radio === 'on'} className="size-[13px] appearance-none rounded-full border border-[#333] bg-white checked:bg-[#222] checked:shadow-[inset_0_0_0_2px_#fff]" />
          ) : (
            <span className="grid">
              <input type="checkbox" defaultChecked={r.state === 'on'} className={`col-start-1 row-start-1 size-[13px] appearance-none border ${r.state === 'mix' ? 'border-[#0063b1] bg-[#cce4f7]' : 'border-[#333] bg-white'}`} />
              {r.state === 'on' && <svg viewBox="0 0 13 13" className="pointer-events-none col-start-1 row-start-1 size-[13px]"><path d="M2.500 6.500l3 3 5-6" fill="none" stroke="#333" strokeWidth="1.200" /></svg>}
            </span>
          )}
          <span className="ml-[5px] mr-[5px] flex"><Icon n={r.ic} small /></span>
          <span className="whitespace-nowrap">{r.t}</span>
        </label>
      </li>
    ))}
  </ul>
);

const PanelHead = ({ t }: { t: string }) => (
  <header className="mb-px flex h-[21px] shrink-0 items-center bg-[#d8e5f2] pl-1.5 font-bold text-[#333]">{t}<RestoreX /></header>
);

function Navigator() {
  return (
    <aside className="flex w-[329px] shrink-0 flex-col">
      <PanelHead t="Navigator - Results" />
      <div className="mb-0.5 ml-0.5 flex min-h-0 flex-1 flex-col border-2 border-b-0 border-[#c8c8d6] bg-white">
        <div className="flex h-[33px] shrink-0 items-start bg-[#f7f7f7] pl-px pr-px pt-0.5 text-[#777]">
          <span className="flex flex-1 grayscale"><Combo icon="analysis" label="Analysis" value="Static Analysis" className="flex-1 bg-[#e5e5e5]" /></span>
          <Arrows both />
        </div>
        <div className="min-h-0 flex-1 overflow-hidden"><Tree rows={TREE1} /></div>
        <div className="h-[409px] shrink-0 border-t-[6px] border-[#f5f5f5] bg-white"><Tree rows={TREE2} /></div>
        <div className="flex h-[26px] shrink-0 bg-[#f7f7f7]" role="tablist">
          {['navtab', 'eyebig', 'camera', 'wedge'].map((n, i) => (
            <button key={n} role="tab" aria-label={n} className={`flex w-[38px] items-center justify-center border-r-2 border-[#c8c8d6] ${i === 3 ? 'bg-white' : 'mb-[3px] border-b border-t bg-[#ececec]'}`}><Icon n={n} small /></button>
          ))}
          <span className="flex-1 border-b border-t border-[#c8c8d6]" />
        </div>
      </div>
    </aside>
  );
}

/* ---------- model view ---------- */
const C = { dk: '#0000aa', bl: '#0000ff', lb: '#0099ff', cy: '#00f6f6', te: '#00e585', gr: '#00ff00', ye: '#ffff00', ol: '#cfcf00', or: '#ffaa00', re: '#ff0000' };
const P = ({ c, d }: { c: string; d: string }) => <polygon points={d} fill={c} />;

const gridDots = (() => {
  let d = '';
  for (let i = -60; i < 40; i++) for (let j = 0; j < 80; j++) {
    const x = 1978.5 + 58.13 * i - 33.7 * j;
    const y = 387 + 8.63 * i + 15.1 * j;
    if (x > 333 && x < 2275 && y > 99 && y < 1120) d += `M${x.toFixed(0)} ${y.toFixed(0)}h1v1h-1z`;
  }
  return d;
})();
const bLines = [-3, -2, -1, 1, 2].map((k) => `M${1978 + 581.3 * k} ${387 + 86.3 * k}l-2240 1003`).join('');
const aLines = [0, 1, 2, 4, 5].map((k) => `M332 ${142.6 + 200.6 * k}l1943 288.500`).join('');

const Spring = ({ x, y }: { x: number; y: number }) => <path d={`M${x - 30} ${y - 4}l60 8M${x} ${y}v-32l30 -14l-60 -48l30 -14v-14`} fill="none" stroke="#5a9cf0" strokeWidth="3" />;
const Foot = ({ x, y }: { x: number; y: number }) => (
  <g opacity="0.85">
    <path d={`M${x - 96} ${y - 50}l74-58h46l71 50l-80 18z`} fill="#22f022" />
    <path d={`M${x - 28} ${y - 55}v68q28 12 56 0v-68q-28-10-56 0z`} fill="#2fb02f" />
  </g>
);
const Hole = ({ x, y, h }: { x: number; y: number; h?: boolean }) => (
  <g>
    <ellipse cx={x} cy={y} rx="44" ry="13" fill="#fff" stroke="#c8a030" strokeWidth="3" />
    {h && <path d={`M${x + 8} ${y - 11}q36 2 34 11q0 9-34 11z`} fill="#5ad84a" />}
    <path d={`M${x - 12} ${y - 8}l24 14M${x + 16} ${y - 10}l-30 16`} stroke="#222" strokeWidth="2" />
    <rect x={x - 5} y={y - 5} width="10" height="10" fill="none" stroke="#f00" strokeWidth="4" />
    <g fill="none" stroke="#bbb" strokeWidth="3" strokeDasharray="3 3">
      <ellipse cx={x} cy={y} rx="98" ry="26" />
      <path d={`M${x - 88} ${y - 5}q4-90 88-96q84 6 88 96M${x - 46} ${y}q4-80 46-100q50 14 62 86`} />
    </g>
  </g>
);

function Model() {
  return (
    <svg viewBox="332 99 1943 1021" preserveAspectRatio="xMinYMin slice" className="h-full w-full" role="img" aria-label="Column stress model">
      <path d="M332 142.600L2275 431V1120H332z" fill="#fdfdfd" />
      <path d={aLines + bLines} fill="none" stroke="#f0f0f0" />
      <path d="M332 743.500l1943 288.500M344 1119L1978 387" fill="none" stroke="#b8fbfb" />
      <path d={gridDots} fill="#707070" />
      <g transform="translate(795 800) scale(.33333)">
        {[[128, 478], [152, 448], [225, 410], [253, 494], [380, 515], [505, 534], [630, 552], [756, 571], [882, 590], [954, 558], [1027, 525], [1100, 492], [1172, 460], [1244, 428], [1317, 396], [1240, 372]].map(([x, y]) => <Spring key={x} x={x} y={y} />)}
        <Foot x={283} y={492} />
        <Foot x={861} y={568} />
        <Foot x={1147} y={418} />
        <P c={C.dk} d="27,340 531,116 1403,244 899,468" />
        <P c={C.bl} d="90,328 120,300 350,198 457,152 531,122 975,187 1100,205 1190,225 1240,262 1190,300 1090,345 985,400 870,425 700,400 350,368 160,340" />
        <P c={C.lb} d="100,312 130,296 457,155 531,130 975,215 1050,250 1120,262 1090,285 1000,312 950,345 940,380 860,397 740,388 600,368 400,352 240,335" />
        <P c={C.cy} d="190,302 215,262 260,235 330,218 380,225 400,215 457,190 540,150 975,240 1080,262 1000,290 890,350 870,372 790,382 620,362 430,344 300,330" />
        <P c={C.te} d="230,285 250,250 330,235 440,200 540,170 975,252 985,262 870,340 790,375 700,370 560,352 440,338 380,318 300,300" />
        <P c={C.bl} d="360,195 390,178 435,170 425,188 385,205" />
        <P c={C.bl} d="175,280 200,264 240,258 235,272 200,285" />
        <P c={C.gr} d="370,270 400,250 457,240 640,275 590,310 560,335 440,338 380,330" />
        <P c={C.ye} d="405,296 457,280 600,272 560,305 530,320 457,326 400,334 340,334 262,318 275,300 330,298 380,310" />
        <P c={C.or} d="262,312 285,300 330,302 400,318 420,322 350,332 290,334" />
        <P c={C.re} d="300,306 340,310 362,320 345,330" />
        <P c={C.ol} d="470,314 560,272 590,275 540,305" />
        <P c={C.gr} d="720,356 770,332 975,258 1005,268 880,340 790,374" />
        <P c={C.ye} d="740,356 775,345 975,264 990,270 870,332 785,368" />
        <P c={C.re} d="770,340 975,262 975,272 770,362" />
      </g>

      <g transform="translate(780 200) scale(.33333 .52296)">
        <P c="#4f62e4" d="502,107 704,48 704,90 604,118" />
        <P c="#4a90d8" d="565,98 604,84 640,80 640,70 604,76 585,88" />
        <P c="#4400d8" d="680,70 704,64 704,88 680,86" />
        <P c="#e89de8" d="704,48 1018,79 918,107 704,88" />
        <P c={C.te} d="604,115 820,135 816,1365 760,1335 604,1317" />
        <P c={C.gr} d="638,115 640,145 656,145 656,183 673,183 673,270 690,270 690,433 707,433 707,745 725,745 725,1082 743,1082 743,1145 760,1145 760,1197 778,1197 778,1222 810,1230 816,1250 816,130" />
        <P c={C.gr} d="604,700 621,702 621,738 638,740 638,788 656,790 656,840 673,842 673,928 690,930 690,1190 674,1190 674,1240 656,1240 656,1290 640,1300 604,1300" />
        <P c={C.ye} d="604,972 621,974 621,1060 638,1062 638,1245 656,1250 656,1270 638,1272 638,1300 604,1300" />
        <P c={C.ol} d="604,1170 621,1172 621,1255 604,1255" />
        <P c={C.or} d="604,1245 621,1247 621,1290 604,1305" />
        <P c={C.ye} d="796,1040 816,1042 816,1140 796,1138" />
        <P c={C.cy} d="604,1312 650,1318 673,1322 673,1268 690,1266 690,1247 725,1247 725,1233 743,1233 743,1246 760,1248 760,1260 778,1262 778,1280 796,1282 796,1296 816,1300 816,1345 760,1338 604,1318" />
        <P c={C.lb} d="656,1320 656,1298 673,1296 673,1290 690,1288 690,1274 706,1272 706,1265 725,1263 725,1275 760,1277 760,1262 778,1270 778,1286 796,1288 796,1304 816,1308 816,1340 760,1337" />
        <P c={C.bl} d="695,1330 707,1330 707,1318 725,1316 725,1308 743,1306 743,1311 778,1313 778,1323 796,1325 796,1338 720,1342" />
        <P c="#4f8fa0" d="604,78 918,107 816,137 604,118" />
        <P c="#4a9a50" d="760,93 797,97 797,126 780,133 760,131" />
        <P c={C.bl} d="502,107 604,118 604,640 502,640" />
        <P c={C.lb} d="502,108 604,118 604,155 594,152 594,135 584,122 565,132 545,122 525,130 502,120" />
        <P c={C.dk} d="502,180 512,187 543,183 543,230 552,230 552,265 563,265 563,297 574,297 574,382 563,382 563,430 552,430 552,450 535,465 525,472 502,477" />
        <P c={C.lb} d="502,626 532,618 532,605 552,600 563,592 563,575 583,570 583,542 594,540 604,524 604,800 502,800" />
        <P c={C.cy} d="502,775 512,772 512,762 552,750 552,740 573,735 573,718 594,712 604,700 604,930 502,930" />
        <P c={C.te} d="502,913 552,897 552,888 573,883 594,865 604,850 604,1080 502,1080" />
        <P c={C.gr} d="502,1062 532,1052 532,1042 575,1025 604,1010 604,1317 502,1345" />
        <P c={C.ye} d="502,1187 543,1178 543,1190 563,1195 563,1217 575,1225 604,1240 604,1317 502,1345" />
        <P c={C.ol} d="502,1247 530,1243 545,1225 563,1217 575,1240 590,1262 604,1265 604,1317 502,1345" />
        <P c={C.or} d="502,1262 520,1257 535,1280 555,1285 575,1296 604,1305 604,1317 502,1345" />
        <P c={C.re} d="502,1290 525,1280 535,1290 552,1287 570,1302 590,1308 604,1316 502,1345" />
        <P c={C.lb} d="816,137 1018,79 1018,340 816,340" />
        <P c={C.bl} d="888,155 905,145 905,125 920,120 947,150 947,163 888,178" />
        <P c={C.cy} d="818,140 836,145 836,165 818,172" />
        <P c={C.cy} d="998,90 1018,80 1018,120 998,118" />
        <P c={C.cy} d="816,322 885,303 888,292 907,285 910,270 925,270 925,278 947,275 947,285 1018,265 1018,500 816,500" />
        <P c={C.te} d="816,470 847,462 847,452 888,440 888,425 907,420 907,408 925,405 925,412 950,412 950,424 985,415 985,423 1018,413 1018,620 816,620" />
        <P c={C.gr} d="816,606 878,590 878,580 907,572 907,560 925,553 955,556 955,564 985,557 985,563 1018,553 1018,780 816,780" />
        <P c={C.ye} d="816,756 857,750 857,738 898,722 898,712 935,700 935,710 978,700 978,711 1018,700 1018,900 816,900" />
        <P c={C.ol} d="816,893 887,874 887,862 947,845 947,855 1018,836 1018,1060 816,1060" />
        <P c={C.or} d="816,1042 867,1030 867,1017 907,1003 907,992 925,988 970,990 970,1000 1018,986 1018,1200 816,1230" />
        <P c={C.re} d="816,1216 847,1208 847,1188 877,1180 877,1165 907,1155 907,1142 925,1135 955,1140 955,1150 985,1145 985,1160 1018,1160 1018,1318 816,1375" />
      </g>
      <path d="M947.500 256v647M981.500 248v640M1033.500 248v649M1052 272v647M1086.500 256v633M1119.500 241v648M947.500 256L1014.700 225l104.600 16.300L1052 271.600zM981 240.300L1086 256" fill="none" stroke="#8a8a8a" />
      <g fill="#f00000">
        {[[947, 256], [981, 240], [1014, 225], [1119, 241], [1086, 256], [1033, 248], [1052, 271], [1119, 889], [1052, 919], [947, 903], [983, 889], [1033, 896], [804, 913], [1095, 956], [1262, 881]].map(([x, y]) => <rect key={x + '-' + y} x={x - 2} y={y - 2} width="4" height="4" />)}
      </g>

      <g transform="translate(795 800) scale(.33333)">
        <path d="M97 335L531 130L1332 248L885 452z" fill="none" stroke="#e0a040" strokeWidth="4" strokeDasharray="42 14" />
        <Hole x={303} y={320} />
        <Hole x={825} y={399} />
        <Hole x={1128} y={263} h />
        <ellipse cx="606" cy="185" rx="44" ry="12" fill="none" stroke="#d8b020" strokeWidth="3" />
        <path d="M530 115l80 10M632 128l-26 8v-18z" stroke="#c00000" strokeWidth="5" fill="#c00000" />
        <path d="M530 120v82M530 226l-8-26h16z" stroke="#000080" strokeWidth="6" fill="#000080" />
        <path d="M530 115l-60 25M475 142l16-14l6 12z" stroke="#10a010" strokeWidth="3" fill="#10c010" />
        <path d="M612 36l-50 45" stroke="#ff5a00" strokeWidth="13" />
        <path d="M540 103l14-38l24 34z" fill="#ff5a00" />
        <circle cx="530" cy="115" r="12" fill="#ff5a00" />
        <g fontSize="30" fontFamily="Open Sans, sans-serif"><text x="650" y="145" fill="#e00000">X</text><text x="522" y="270" fill="#000080">Z</text><text x="450" y="152" fill="#10a010">Y</text></g>
      </g>
    </svg>
  );
}

const cubeLines = (ox: number, oy: number, ux: number, uy: number, vx: number, vy: number) =>
  [0, 0.25, 0.75, 1].map((k) => `M${ox + ux * k} ${oy + uy * k}l${vx} ${vy}M${ox + vx * k} ${oy + vy * k}l${ux} ${uy}`).join('');
const ViewCube = () => (
  <svg viewBox="55 90 295 282" className="absolute right-[18px] top-[21px] h-[94px] w-[98px]" role="img" aria-label="View cube">
    <path d="M60 142l178 26v198L60 340z" fill="#d6d6d6" />
    <path d="M238 168l105-46v198l-105 46z" fill="#bcbcbc" />
    <path d="M60 142l105-47 178 27-105 46z" fill="#a2a2a2" />
    <path d={cubeLines(60, 142, 178, 26, 0, 198) + cubeLines(238, 168, 105, -46, 0, 198) + cubeLines(60, 142, 178, 26, 105, -47)} fill="none" stroke="#787474" strokeWidth="5" />
    <g fontSize="40" fontWeight="bold" fontFamily="Open Sans, sans-serif">
      <text x="128" y="272" fill="#3ec43e">-Y</text><text x="274" y="262" fontSize="34" fill="#d84a4a">-X</text><text x="182" y="142" fontSize="24" fill="#5a5a90">-Z</text>
    </g>
  </svg>
);

/* ---------- control panel ---------- */
const LEVELS = ['235.000', '235.000', '211.500', '188.000', '164.500', '141.000', '117.500', '94.000', '70.500', '47.000', '23.500', '0.000'];
const BANDS: [string, string][] = [
  ['bg-[#bb0000]', '0.02 %'], ['bg-[#ff0000]', '5.59 %'], ['bg-[#ffaa00]', '4.68 %'], ['bg-[#cfcf00]', '5.28 %'], ['bg-[#ffff00]', '7.69 %'], ['bg-[#00ff00]', '18.67 %'],
  ['bg-[#00e585]', '15.56 %'], ['bg-[#00f6f6]', '9.81 %'], ['bg-[#0099ff]', '10.72 %'], ['bg-[#0000ff]', '11.23 %'], ['bg-[#0000aa]', '10.74 %'],
];
function ControlPanel() {
  return (
    <aside className="flex w-[281px] shrink-0 flex-col">
      <PanelHead t="Control Panel" />
      <div className="min-w-0 flex-1 border border-b-0 border-[#c8c8d6] bg-[#f7f7f7]">
        <div className="h-10 whitespace-nowrap bg-white pl-2.5 pt-1 text-[10px] leading-[13px]">
          Surfaces | Stresses | Equivalent Stresses | <Sigma t="eqv,Mises" /><br /><Sigma t="eqv,Mises,Max" /> [N/mm<Sq />]
        </div>
        <div className="flex pt-[11px]">
          <ul className="mt-[-5px] w-[92px] text-right">{LEVELS.map((l, i) => <li key={i} className="h-[26px] leading-[26px]">{l}</li>)}</ul>
          <ul className="ml-[13px] w-[41px] pt-2">{BANDS.map(([c]) => <li key={c} className="h-[26px] pb-px"><i className={`block h-full border-b border-white/60 ${c}`} /></li>)}</ul>
          <ul className="w-[51px] pt-2 text-right">{BANDS.map(([, v]) => <li key={v} className="h-[26px] leading-[26px]">{v}</li>)}</ul>
          <Slider.Root orientation="vertical" defaultValue={[0, 100]} className="relative ml-[7px] flex h-[298px] w-[21px] flex-col items-center">
            <Slider.Track className="w-1 grow border-x border-[#d0d0d0] bg-[#e8ecec]" />
            <Slider.Thumb aria-label="Lower limit" className="block h-2.5 w-[21px] bg-[#0078d7] outline-none" />
            <Slider.Thumb aria-label="Upper limit" className="block h-2.5 w-[21px] bg-[#0078d7] outline-none" />
          </Slider.Root>
        </div>
      </div>
    </aside>
  );
}

/* ---------- results table ---------- */
const DATA: string[][] = [
  ['1', '0', '', '', '', '0.557', '0.556', '0.557'],
  ['2', '0', '', '', '', '0.557', '0.556', '0.557'],
  ['3', '500', '500', '0', '1503', '0.449', '0.418', '0.449'],
  ['4', '500', '0', '0', '1552', '0.449', '0.417', '0.449'],
  ['5', '0', '40', '0', '1408', '11.786', '11.786', '10.868'],
  ['', '', '', '', '1409', '18.622', '18.622', '17.154'],
  ['7', '120', '100', '0', '1', '234.315', '234.315', '234.230'],
  ['', '', '', '', '2', '231.514', '231.514', '229.278'],
  ['9', '400', '120', '', '33', '64.014', '64.014', '53.088'],
];
const th = 'border-r border-[#c9c9c9] p-0 font-normal';
const td = 'border-b border-r border-[#dcdcdc] p-0';
function Results() {
  return (
    <table className="w-full table-fixed border-separate border-spacing-0">
      <colgroup>
        <col className="w-[60px]" /><col className="w-[60px]" /><col className="w-20" /><col className="w-20" /><col className="w-20" /><col className="w-20" />
        <col className="w-[85px]" /><col className="w-[85px]" /><col className="w-[85px]" /><col className="w-[85px]" /><col />
      </colgroup>
      <thead>
        <tr className="h-2.5">{Array.from({ length: 11 }, (_, i) => <td key={i} className="border-b border-r border-white bg-[#e0e0e0] p-0" />)}</tr>
        <tr className="h-4 bg-[#efefef]">
          <th rowSpan={2} className={`${th} border-b bg-[#e1e1e1] leading-[13px]`}>Surface<br />No.</th>
          <th rowSpan={2} className={`${th} border-b leading-[13px]`}>FE Node<br />No.</th>
          <th colSpan={3} className={th}>FE Node Coordinates [mm]</th>
          <th rowSpan={2} className={`${th} border-b`} />
          <th rowSpan={2} className={`${th} border-b`} />
          <th colSpan={3} className={`${th} leading-[15px]`}>Equivalent Stresses - von Mises [N/mm<Sq />]</th>
          <th rowSpan={2} className={`${th} border-b pt-3.5`}>Surface Comment</th>
        </tr>
        <tr className="h-4 bg-[#efefef]">
          {['X', 'Y', 'Z'].map((t) => <th key={t} className={`${th} border-b leading-[15px]`}>{t}</th>)}
          {['Max', '+', '-'].map((t) => <th key={t} className={`${th} border-b leading-3`}><Sigma t={'eqv,Mises,' + t} /></th>)}
        </tr>
      </thead>
      <tbody className="leading-[15px]">
        {DATA.map((r, i) => (
          <tr key={i} className={`h-4 ${i % 2 ? 'bg-[#fffbd9]' : 'bg-[#fff8d0]'}`}>
            {i === 0 && <td rowSpan={9} className="border-r border-[#dcdcdc] bg-[#e1e1e1] p-0 text-center align-top">1</td>}
            <td className={`${td} text-center`}>{i === 0 ? <span className="mx-px block h-[15px] border border-dotted border-black leading-[13px]">1</span> : r[0]}</td>
            {[1, 2, 3].map((c) => <td key={c} className={`${td} pr-1 text-right`}>{r[c]}</td>)}
            <td className={`${td} text-center`}>{r[4]}</td>
            <td className={td} />
            {[5, 6, 7].map((c) => (
              <td key={c} className={td}>
                <div className="grid h-[15px] items-center pl-[5px] pr-4">
                  <i className="col-start-1 row-start-1 h-[11px] border-l border-[#b0b0b0] bg-[#ffb9bd]" style={{ width: Math.max(1, Math.round((Number(r[c]) / 235) * 62)) }} />
                  <span className="col-start-1 row-start-1 text-right leading-[15px]">{r[c]}</span>
                </div>
              </td>
            ))}
            <td className={td} />
          </tr>
        ))}
      </tbody>
    </table>
  );
}

const TABS = ['Global Deformations', 'Local Deformations', 'Basic Internal Forces', 'Principal Internal Forces', 'Design Internal Forces', 'Basic Stresses', 'Principal Stresses', 'Elastic Stress Components', 'Equivalent Stresses - von Mises', 'Equivalent Stresses - Tresca', 'Equivalent Stresses - Rankine', 'Equivalent Stresses - Bach', 'Basic Total Strains', 'Principal Total Strains', 'Maximum Total Strains', 'Equivalent Total Strains - von Mises'];
const MENU: [string, string][] = [['analysis', 'Overview'], ['pin', 'Results by Node'], ['seg', 'Results by Line'], ['surf', 'Results by Surface in Grid Points'], ['surf', 'Results by Surface in Mesh Nodes']];

function ResultPanel() {
  return (
    <section className="relative z-10 flex h-[279px] shrink-0 flex-col rounded-t-md border border-[#b8b8b8] border-t-[#a8c4c4] bg-[#f7f7f7] shadow-[0_6px_12px_rgba(0,0,0,0.25)]">
      <div className="flex h-7 shrink-0 items-center rounded-t-md bg-linear-to-r from-[#e9f7f9] via-[#e4f7f6] to-[#eef5e3] pl-[9px]">
        Surfaces | Equivalent Stresses - von Mises in Mesh Nodes
        <button aria-label="Close table" className="ml-auto flex h-5 w-[19px] items-center justify-center bg-[#c75050] font-bold text-white">x</button>
      </div>
      <nav className="flex h-5 shrink-0 items-center">
        {['Go To', 'Edit', 'Selection', 'View', 'Settings'].map((t) => <button key={t} className="px-2">{t}</button>)}
      </nav>
      <div className="flex h-[27px] shrink-0 items-center border-t border-[#e2e2e2] pl-0.5">
        <Combo icon="analysis" label="Analysis type" value="Static Analysis" className="w-[200px] bg-[#e7e7f3]" />
        <Arrows dark /><Sep />
        <div className="relative ml-1">
          <span className="flex h-[21px] w-[270px] items-center bg-[#cce4f7] pl-[3px]">
            <Icon n="surf" small />
            <select aria-label="Results by" className="flex-1 appearance-none bg-transparent pl-1 outline-none"><option>Results by Surface in Mesh Nodes</option></select>
          </span>
          <ul role="listbox" className="absolute left-0 top-5 z-20 w-[272px] border border-[#8c8c8c] bg-[#f2f2f2] shadow-[3px_4px_4px_rgba(0,0,0,0.4)]">
            {MENU.map(([ic, t], i) => (
              <li key={t} role="option" aria-selected={i === 4} className={`flex h-4 items-center gap-1 pl-1 ${i === 4 ? 'bg-[#0078d7] text-white' : ''}`}><Icon n={ic} small />{t}</li>
            ))}
          </ul>
        </div>
        <Arrows dark /><Sep />
        <LoadCase className="w-[270px]" />
        <Arrows dark />
        <Tools items="| *gotoL *gotoR | *eyeres xxxres | tree | tgray tyel tyelg | *bars | tlines | xls xlsg | filterw | dec | help" />
        <i className="ml-0.5 h-full w-px bg-[#dcdcdc]" />
      </div>
      <div className="flex min-h-0 flex-1 overflow-hidden border-t border-[#c8c8d4]">
        <div className="min-w-0 flex-1"><Results /></div>
        <div className="w-[18px] border-l border-white bg-[#f2f2f2] pl-[7px] pt-[17px]"><i className="block h-[18px] w-0.5 bg-[#8a8a8a]" /></div>
      </div>
      <div className="z-10 flex h-[22px] shrink-0 items-start overflow-hidden bg-[#f7f7f7]" role="tablist">
        <div className="flex h-full w-[126px] shrink-0 items-center justify-between bg-white pl-[5px] pr-1">
          <button aria-label="First"><svg viewBox="0 0 8 8" className="size-2"><path d="M1 0v8M8 0v8L3 4z" fill="#444" stroke="#444" strokeWidth=".5" /></svg></button>
          <button aria-label="Back"><svg viewBox="0 0 5 8" className="h-2 w-[5px]"><path d="M5 0v8L0 4z" fill="#444" /></svg></button>
          <span className="px-1.5">9 of 27</span>
          <button aria-label="Forward"><svg viewBox="0 0 5 8" className="h-2 w-[5px]"><path d="M0 0v8l5-4z" fill="#444" /></svg></button>
          <button aria-label="Last"><svg viewBox="0 0 8 8" className="size-2"><path d="M7 0v8M0 0v8l5-4z" fill="#444" stroke="#444" strokeWidth=".5" /></svg></button>
        </div>
        <div className="flex min-w-0 flex-1 overflow-hidden">
          {TABS.map((t, i) => (
            <button key={t} role="tab" aria-selected={i === 8} className={`shrink-0 whitespace-nowrap border-r-2 border-[#c8c8d6] px-[7px] ${i === 8 ? 'h-[22px] bg-white' : 'h-5 border-b border-t bg-[#ececec]'}`}>{t}</button>
          ))}
        </div>
        <div className="flex h-full w-[30px] shrink-0 items-center justify-between px-[5px]">
          <button aria-label="Scroll left"><svg viewBox="0 0 7 12" className="h-3 w-[7px]"><path d="M7 0v12L0 6z" fill="#999" /></svg></button>
          <button aria-label="Scroll right"><svg viewBox="0 0 7 12" className="h-3 w-[7px]"><path d="M0 0v12l7-6z" fill="#000" /></svg></button>
        </div>
      </div>
      <svg viewBox="790 1070 90 210" className="pointer-events-none absolute -top-[51px] left-[457px] z-30 h-[210px] w-[90px]" aria-hidden="true">
        <path d="M872 1083L817 1250" stroke="#ff4444" strokeWidth="9" strokeLinecap="round" />
        <path d="M809 1276l-6-34 28 11z" fill="#ff4444" stroke="#ff4444" />
      </svg>
    </section>
  );
}

export default function App() {
  return (
    <div className="flex h-screen flex-col overflow-hidden bg-[#f7f7f7] font-['Open_Sans','Noto_Sans',sans-serif] text-[11px] leading-4 text-black">
      <header className="flex h-[23px] shrink-0 items-center gap-0.5 bg-[#f3f3f3] pl-[3px] text-[#8c8c8c]">
        <Icon n="app" />
        Dlubal RFEM | 6.11.0009 | Example-01-EN-CEN.rf6*
        <span className="ml-auto flex items-center gap-9 pr-[19px]">
          <button aria-label="Minimize"><svg viewBox="0 0 11 11" className="size-[11px]"><path d="M0 6h11" stroke="#777" /></svg></button>
          <button aria-label="Restore"><svg viewBox="0 0 11 11" className="size-[11px]"><path d="M.5 2.500h8v8h-8zM3 .5h7.500V8" fill="none" stroke="#777" /></svg></button>
          <button aria-label="Close"><svg viewBox="0 0 11 11" className="size-[11px]"><path d="M.5.5l10 10M10.500.5l-10 10" stroke="#777" /></svg></button>
        </span>
      </header>
      <nav className="flex h-5 shrink-0 items-center">
        <span className="w-4 shrink-0"><Icon n="rfem" small /></span>
        {['File', 'Edit', 'View', 'Insert', 'Assign', 'Calculate', 'Results', 'Tools', 'Options', 'Window', 'CAD-BIM', 'Help'].map((t) => <button key={t} className="px-2">{t}</button>)}
        <svg viewBox="0 0 5 8" className="ml-auto mr-1 h-2 w-[5px]"><path d="M0 0v8l5-4z" fill="#888" /></svg>
        <input aria-label="Type a keyword" placeholder="Type a keyword (Alt+Q)" className="h-[19px] w-[230px] bg-[#e7e7f3] px-[3px] outline-none placeholder:text-[#777]" />
        <span className="ml-1 mr-2 flex"><Icon n="search" small /></span>
        <span className="whitespace-nowrap">Online License 36 | Stefan Hoffmann | Dlubal Software GmbH</span>
        <button aria-label="Minimize view" className="ml-2"><svg viewBox="0 0 7 9" className="h-[9px] w-[7px]"><path d="M0 7.500h7" stroke="#222" strokeWidth="2" /></svg></button>
        <span className="ml-2.5 flex"><RestoreX /></span>
      </nav>
      <div className="flex h-7 shrink-0 items-center border-t border-[#e2e2e2] pb-px">
        <Grip />
        <Tools items="newdoc open cblue cloud archive save print ^ reportnew report | undo ^ redo ^ | *panelL *tableP graph *ctrlP console sc layerst listwin headset # script ^ addpage # conv1 conv2" />
        <LoadCase className="ml-0.5 w-[269px]" />
        <Arrows />
        <Tools items="filterx ^ eyediag xxxdiag eyeload xxxload eyesolid gridcube ^ *eyeres xxxres | resgear abacus ^ # hand zoomx cube cubepen box3d | axx axy axz axnx ^ microscope ^ | chairs ^ plane ^ dim10 ^ ibeam ^ meshc orange" />
      </div>
      <div className="flex h-7 shrink-0 items-center border-t border-[#e2e2e2] pb-px">
        <Grip />
        <Tools items="node ^ line member ^ polyl ^ | supn supl sups | sfa ^ sfb ^ sfc ^ sfd ^ solid | grayn ^ | ldn ldl ldg lds ldc ^ ldp ^ # filterw | diagw deform film | memres *rainbow dice reaction leaf | r1 r2 r3 r4 r5 r6 sfres thermo | rgb ^ # gridwin target *plxy plyz plxz | snap1 rotate mirror scalex boxgear # layereye layerlock layerwin" />
        <Combo label="Layer" value="1 - Default Base Layer" className="ml-0.5 w-[200px] bg-[#e7e7f3]">
          <span className="flex gap-px [&>svg]:size-[13px]"><Icon n="ok" /><Icon n="bulb" /><Icon n="unlock" /></span>
          <i className="ml-0.5 h-3.5 w-[11px] bg-[#c8ffff]" />
        </Combo>
        <Tools items="filterx ^" />
      </div>
      <main className="flex min-h-0 flex-1 gap-[3px]">
        <Navigator />
        <div className="flex min-w-0 flex-1 flex-col">
          <div className="flex min-h-0 flex-1 gap-1">
            <div className="relative min-w-0 flex-1 overflow-hidden bg-white">
              <Model />
              <div className="absolute left-1.5 top-1 whitespace-nowrap leading-[17px]">
                CO1 - 1.35 * LC1 + 1.50 * LC2<br />Static Analysis<br />Equivalent Stresses von Mises σ<sub className="bottom-0 top-[3px] text-[11px]">eqv,Mises,Max</sub> [N/mm<sup className="-top-1 text-[11px]">2</sup>]
              </div>
              <ViewCube />
            </div>
            <ControlPanel />
          </div>
          <ResultPanel />
        </div>
      </main>
      <div className="flex h-6 shrink-0 items-center bg-[#f5f5f5]">
        <Tools tight items="xyzwin" />
        <Combo label="Coordinate system" value="1 - Global XYZ" className="ml-px w-[200px] bg-[#e7e7f3]"><i className="ml-px size-[11px] bg-[#c8ffff]" /></Combo>
        <Tools tight items="| bcube bcol bbeam bbox banchor | bsheet bbrick bdimx ^ bdimxx bman bwin | blink ^ bnum ^ | l1 l2 l3 ^ l4 l5 l6 l7 l8 l9 l10 l11 l12 | m1 ^ m2 m3 m4 m5 m6" />
        <span className="ml-auto flex gap-1.5">
          <span className="flex"><Tools tight items="*geye" /></span>
          <span className="flex"><Tools tight items="gnew *geye" /></span>
          <span className="flex"><Tools tight items="gstar *leye" /></span>
          <span className="mx-1.5 flex"><Tools tight items="corner" /></span>
          <span className="flex"><Tools tight items="*gmag *magnet *sq *circx sqx perp slash par tang *circ xs1 xs2 xs3 dots *griddots bdots stack *redb *plumb" /></span>
        </span>
      </div>
      <footer className="mb-px flex h-4 shrink-0 justify-end bg-[#e7e7f3] [&>span]:border-l [&>span]:border-[#cfcfd8] [&>span]:pl-1">
        <span className="w-[105px]" /><span className="w-[206px]">CS: Global XYZ</span><span className="w-[67px]">Plane: XY</span><span className="w-[75px]" /><span className="w-[76px]" /><span className="w-[76px]" />
      </footer>
    </div>
  );
}
